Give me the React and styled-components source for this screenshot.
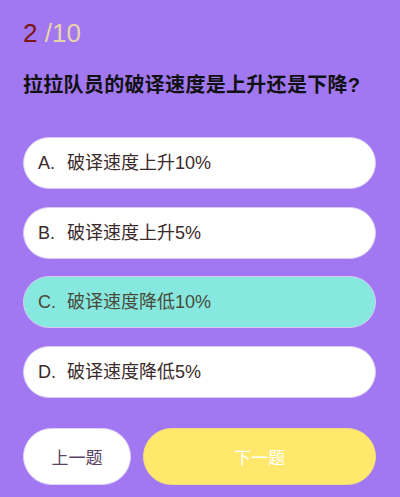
import React from "react";
import styled, { createGlobalStyle } from "styled-components";

const options = [
    { key: "A", text: "破译速度上升10%" },
    { key: "B", text: "破译速度上升5%" },
    { key: "C", text: "破译速度降低10%", selected: true },
    { key: "D", text: "破译速度降低5%" },
];

const App = () => {
    return (
        <>
            <GlobalStyle />
            <Page>
                <Counter>
                    <Current>2</Current>
                    <Total> /10</Total>
                </Counter>
                <Question>拉拉队员的破译速度是上升还是下降?</Question>
                <OptionList>
                    {options.map((option) => (
                        <Option key={option.key} $selected={option.selected}>
                            <Label>
                                <OptionKey>{option.key}.</OptionKey>
                                {option.text}
                            </Label>
                        </Option>
                    ))}
                </OptionList>
                <Footer>
                    <PrevButton>上一题</PrevButton>
                    <NextButton>下一题</NextButton>
                </Footer>
            </Page>
        </>
    );
};

export default App;

const GlobalStyle = createGlobalStyle`
    html, body {
        margin: 0;
        padding: 0;
        background: #a177f2;
    }
    * {
        box-sizing: border-box;
    }
`;

const Page = styled.div`
    width: 400px;
    height: 497px;
    padding: 18px 24px 0 23px;
    background: #a177f2;
    font-family: "Liberation Sans", "Noto Sans CJK SC", sans-serif;
    display: flex;
    flex-direction: column;
`;

const Counter = styled.div`
    font-size: 26px;
    line-height: 30px;
    height: 30px;
`;

const Current = styled.span`
    color: #7d1414;
`;

const Total = styled.span`
    color: #e8d4ab;
`;

const Question = styled.h1`
    margin: 23px 0 0;
    font-size: 20px;
    line-height: 28px;
    font-weight: bold;
    letter-spacing: 0.3px;
    color: #111;
`;

const OptionList = styled.div`
    margin-top: 38px;
    display: flex;
    flex-direction: column;
    gap: 17.5px;
`;

const Option = styled.div`
    height: 52px;
    border-radius: 26px;
    border: 1px solid #d9c9f3;
    background: ${(p) => (p.$selected ? "#86e8de" : "#ffffff")};
    color: ${(p) => (p.$selected ? "#4a4a3c" : "#3b2a2a")};
    display: flex;
    align-items: center;
    padding-left: 14px;
    font-size: 18px;
`;

const Label = styled.span`
    line-height: 24px;
`;

const OptionKey = styled.span`
    display: inline-block;
    width: 29px;
`;

const Footer = styled.div`
    margin-top: 30.5px;
    display: flex;
    gap: 12px;
`;

const BaseButton = styled.div`
    height: 57px;
    border-radius: 29px;
    display: flex;
    align-items: center;
    justify-content: center;
    font-size: 17px;
    font-family: "Noto Sans CJK SC", sans-serif;
`;

const PrevButton = styled(BaseButton)`
    width: 108px;
    background: #ffffff;
    border: 1px solid #e0d4f6;
    color: #5a4466;
`;

const NextButton = styled(BaseButton)`
    flex: 1;
    background: #ffe86c;
    border: 1px solid #f0dc80;
    color: #ffffff;
`;
